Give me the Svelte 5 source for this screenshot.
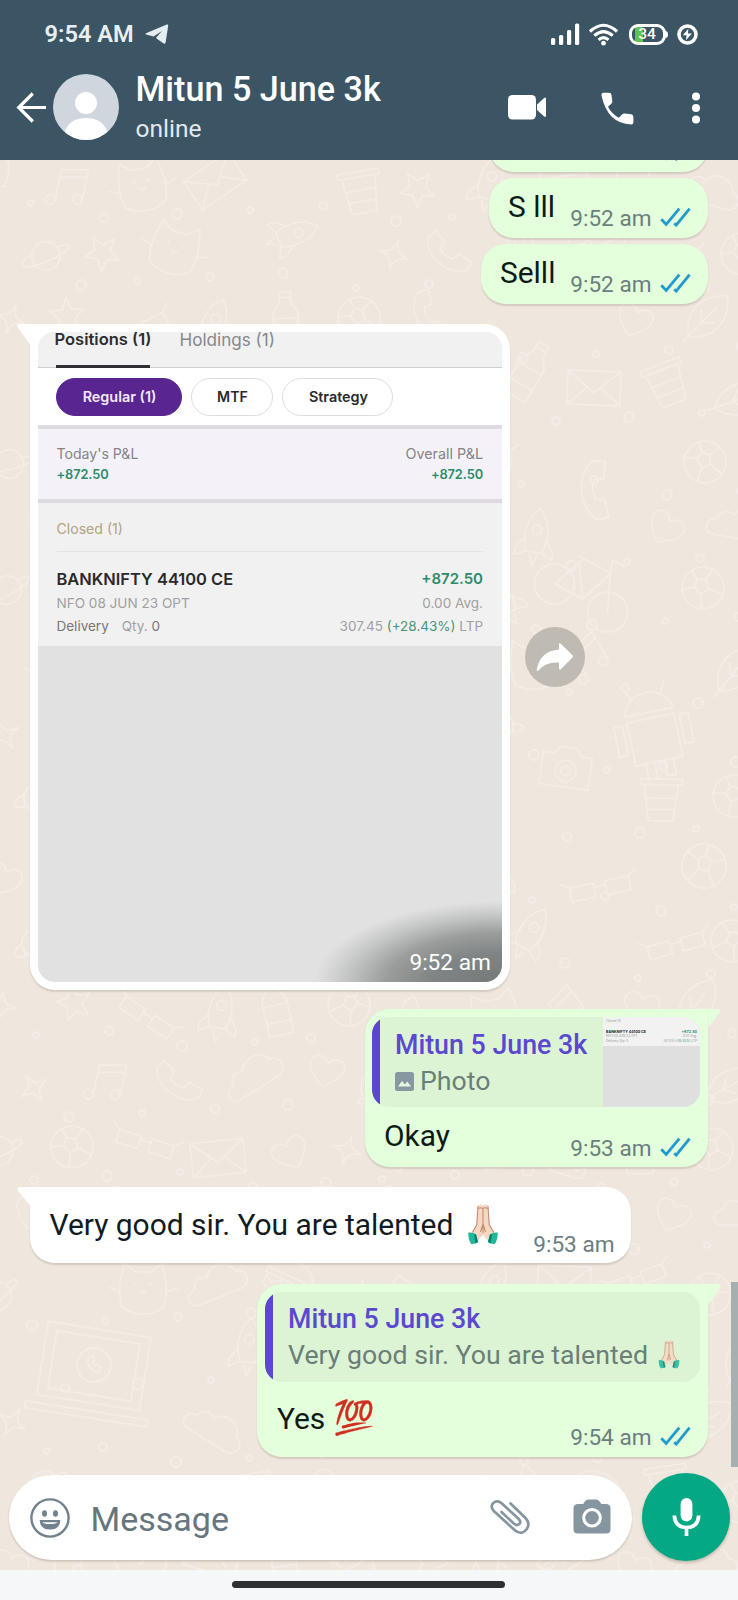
<script>
  // Wallpaper doodles: line drawings on a free canvas.
  const shapes = {
    heart: 'M0 16C-14 6-20-2-18-9c2-8 13-9 18 0 5-9 16-8 18 0C20-2 14 6 0 16z',
    star: 'M0-18L5-6 18-5 8 4 11 17 0 10-11 17-8 4-18-5-5-6z',
    spark: 'M0-16C2-4 4-2 16 0 4 2 2 4 0 16-2 4-4 2-16 0-4-2-2-4 0-16z',
    planet: 'M-15 0a15 15 0 1 0 30 0a15 15 0 1 0-30 0M-14-4C-34 4-28 14 0 6S34-12 13-8',
    rocket: 'M0-30C14-18 14 4 8 16H-8C-14 4-14-18 0-30zM-5-8a5 5 0 1 0 10 0a5 5 0 1 0-10 0M-11 2l-9 12v8l12-6M11 2l9 12v8l-12-6M-4 20l4 10 4-10',
    camera: 'M-26-14h12l5-8h18l5 8h12v34h-52zM-11 3a11 11 0 1 0 22 0a11 11 0 1 0-22 0M-5 3a5 5 0 1 0 10 0a5 5 0 1 0-10 0',
    android: 'M-24-8h48v44h-48zM-24-14a24 20 0 0 1 48 0zM-14-30l-7-11M14-30l7-11M-38-6h9v30h-9zM29-6h9v30h-9zM-14 36v16h9V36M5 36v16h9V36M-9-22h1M8-22h1',
    bike: 'M-46 16a20 20 0 1 0 40 0a20 20 0 1 0-40 0M14 16a20 20 0 1 0 40 0a20 20 0 1 0-40 0M-26 16l14-36h30l16 36M-14-14L6 16l12-34M-18-20h14M18-20l-4-12h14M-26 16H6',
    phone: 'M-22-16c-4 20 18 42 38 38l6-8-13-10-7 5C-6 5-9 1-10-4l6-6-9-13z',
    cup: 'M-18-16h36L13 22h-26zM-22-22h44v6h-44zM-15-2h30M-13 10h26',
    cat: 'M-22 20C-28 0-22-14-20-26l12 9h16l12-9c2 12 8 26 2 46-12 10-32 10-44 0zM-9-4h2M7-4h2M-3 3l3 3 3-3M-24 4l-12-4M24 4l12-4',
    ball: 'M-22 0a22 22 0 1 0 44 0a22 22 0 1 0-44 0M-7-6L0-11 7-6 5 4h-10zM0-11v-11M7-6l13-5M5 4l8 13M-5 4l-8 13M-7-6l-13-5',
    cloud: 'M-26 14h50c12-2 12-18 0-19C22-20 0-22-6-10c-9-5-16 0-16 7-13 1-14 15-4 17z',
    bottle: 'M-6-32H6v12l7 10v38h-26v-38l7-10zM-13-4h26M-13 14h26M-6-26H6',
    note: 'M-12 14V-18L16-24V8M-22 15a5 5 0 1 0 10 0a5 5 0 1 0-10 0M6 9a5 5 0 1 0 10 0a5 5 0 1 0-10 0M-12-10L16-16',
    mail: 'M-28-18h56v36h-56zM-28-18L0 5 28-18M-28 18L-7-1M28 18L7-1',
    leaf: 'M-20 20C-24-8-4-24 22-22 24 4 8 24-20 20zM-26 26L10-10M-6 6v-14M-6 6H8',
    burger: 'M-24-4C-24-26 24-26 24-4zM-26-4h52v6h-52zM-24 4l8 6 8-6 8 6 8-6 8 6 8-6v10c0 6-48 6-48 0z',
    glasses: 'M-30-6h24v14h-24zM6-6h24v14H6zM-6-2H6M-30-6l-8-6M30-6l8-6',
    laptop: 'M-52-36h104v74h-104zM-42-28h84v58h-84zM-62 46h124v7h-124zM-17 0a17 17 0 1 0 34 0a17 17 0 1 0-34 0M-7-6c0 8 6 13 13 12l2-4-5-3-2 2-3-4 2-2-3-4z'
  };
  const names = ['heart','planet','cat','cup','spark','rocket','cloud','ball','note','mail','leaf','star','burger','bottle','phone','glasses'];
  const fixed = [
    ['bike', 585, 422, 28, 1], ['android', 652, 566, -12, 1], ['camera', 566, 608, 8, 0.95],
    ['laptop', 94, 1205, 9, 1], ['bottle', 528, 212, 30, 1], ['rocket', 292, 75, 70, 0.9],
    ['ball', 704, 706, 12, 1], ['glasses', 600, 728, -12, 1], ['phone', 600, 330, 40, 1.1]
  ];
  const doodles = [...fixed];
  const dots = [];
  for (let row = 0; row < 21; row++) {
    for (let col = 0; col < 11; col++) {
      const k = row * 11 + col;
      const x = col * 70 + (row % 2) * 34 + ((k * 37) % 17) - 4;
      const y = row * 69 + ((k * 53) % 19) + 14;
      if (!fixed.some((f) => Math.hypot(f[1] - x, f[2] - y) < (f[0] === 'laptop' ? 88 : 62))) {
        doodles.push([names[(k * 7 + row * 3 + ((k * k) % 5)) % names.length], x, y, ((k * 47) % 70) - 35, 0.95]);
      }
      dots.push([x + 35, y + 29, 3 + (k % 3)]);
    }
  }
</script>

{#snippet ticks()}
  <svg class="ticks" width="31" height="20" viewBox="0 0 31 20"><path d="M1.3 12.2L6.2 17.4 19.3 1.6M14.2 16.2l2 1.9L29.6 1.6" /></svg>
{/snippet}

{#snippet hands(w, h)}
  <svg class="hands" width={w} height={h} viewBox="0 0 31 41" role="img" aria-label="Folded hands">
    <path d="M10.5 1.5q2.500-2 5 0 2.500-2 5 0L22 20.500l5 8-6.500 8-5-5.500-5 5.500L4 28.500l5-8z" fill="#f5d8c4" />
    <path d="M10.500 2L9.300 20.500 5 28.500M20.500 2l1.200 18.500 4.500 8M15.500 4v25M15.500 20l-2.500 8M15.500 20l2.500 8M11 4.500q2-1.500 4 0 2.500-1.500 5 0" fill="none" stroke="#c58d72" stroke-width="1.100" />
    <path d="M.8 28.500q4.500-.5 7.700 1.700L10.500 38q-3.500 2.500-7 2-2.900-5-2.700-11.500zM30.200 28.500q-4.500-.5-7.700 1.700L20.500 38q3.500 2.500 7 2 2.900-5 2.700-11.500z" fill="#1fb89a" />
    <path d="M8.500 30.200L10.500 38l-2.500 1.500-1.500-9zM22.500 30.200L20.500 38l2.500 1.500 1.500-9z" fill="#0a7f6c" />
  </svg>
{/snippet}

<div class="phone">
  <header>
    <div class="status">
      <span class="clock">9:54 AM</span>
      <svg class="plane" width="24" height="21" viewBox="0 0 24 21"><path d="M1 10.500Q0 9.800 1 9.300L21.800.6q1.600-.5 1.400 1.200L20.600 18.600q-.4 1.600-1.900.8L12.500 15.300 11 13.800 17 7 8.500 12.400z" fill="#e6edf0" /></svg>
      <div class="sys">
        <svg width="29" height="22" viewBox="0 0 29 22" fill="#fff"><rect x="0" y="15" width="4.200" height="7" rx="1.500" /><rect x="8" y="12" width="4.200" height="10" rx="1.500" /><rect x="16" y="7" width="4.200" height="15" rx="1.500" /><rect x="24" y="0.500" width="4.200" height="21.500" rx="1.500" /></svg>
        <svg class="wifi" width="29" height="23" viewBox="0 0 29 23" fill="none" stroke="#fff" stroke-width="3.100"><path d="M1 8.500Q14.500-4 28 8.500M5.300 12.700Q14.500 4.500 23.700 12.700M9.500 16.800Q14.500 12.300 19.500 16.800" /><circle cx="14.500" cy="20.200" r="2.400" fill="#fff" stroke="none" /></svg>
        <div class="battery"><span>34</span></div>
        <svg width="21" height="21" viewBox="0 0 21 21"><circle cx="10.500" cy="10.500" r="8.500" fill="none" stroke="#fff" stroke-width="3.600" /><path d="M11.300 4.800L5.800 11.300h3.700l-.5 5 5.800-6.900h-3.800z" fill="#fff" /></svg>
      </div>
    </div>
    <div class="bar">
      <svg class="back" width="31" height="31" viewBox="0 0 31 31" fill="none" stroke="#fff" stroke-width="3.200"><path d="M30 15.500H3M16.800 1.500L2.700 15.500l14.100 14" /></svg>
      <svg class="avatar" width="66" height="66" viewBox="0 0 66 66"><defs><clipPath id="face"><circle cx="33" cy="33" r="33" /></clipPath></defs><g clip-path="url(#face)"><rect width="66" height="66" fill="#cfd6de" /><circle cx="33" cy="29" r="11" fill="#fff" /><path d="M11 59Q16 44 33 44t22 15v8H11z" fill="#fff" /></g></svg>
      <div class="who"><div class="title">Mitun 5 June 3k</div><div class="online">online</div></div>
      <div class="actions">
        <svg width="39" height="25" viewBox="0 0 39 25" fill="#fff"><rect width="28" height="24.500" rx="4.500" /><path d="M29 9.500L36.200 3Q38 1.800 38 4v16.500q0 2.200-1.800 1L29 15z" /></svg>
        <svg width="33" height="33" viewBox="0 0 33 33" fill="#fff"><path d="M2.500.7h5.600q2.200 0 2.400 2.200l.8 6.200q.2 1.800-1.200 3L7 14.800q3.500 7 10.800 11l3.200-3.300q1.100-1.200 2.800-1l6.400.7q2.200.3 2.200 2.500v5.500q0 2.400-2.400 2.300Q6.500 31.500.5 3.500.2.900 2.500.700z" /></svg>
        <svg width="8" height="32" viewBox="0 0 8 32" fill="#fff"><circle cx="4" cy="4.500" r="4" /><circle cx="4" cy="16" r="4" /><circle cx="4" cy="27.500" r="4" /></svg>
      </div>
    </div>
  </header>

  <main>
    <svg class="wallpaper" width="738" height="1410" viewBox="0 0 738 1410" aria-hidden="true">
      {#each doodles as d}<path d={shapes[d[0]]} transform="translate({d[1]} {d[2]}) rotate({d[3]}) scale({d[4]})" />{/each}
      {#each dots as d}<circle cx={d[0]} cy={d[1]} r={d[2]} />{/each}
    </svg>

    <section class="list">
      <div class="bubble out short clipped"><span class="meta">9:52 am {@render ticks()}</span></div>
      <div class="bubble out short"><span class="body">S lll</span><span class="meta">9:52 am {@render ticks()}</span></div>
      <div class="bubble out short third"><span class="body">Selll</span><span class="meta">9:52 am {@render ticks()}</span></div>

      <div class="row">
        <div class="bubble in photo">
          <svg class="tail left" width="14" height="22" viewBox="0 0 14 22"><path d="M14 0H2Q-1 .8.800 3.500L13.500 21z" /></svg>
          <div class="shot">
            <div class="tabs"><span class="on">Positions (1)</span><span>Holdings (1)</span></div>
            <div class="pills"><span class="pill active">Regular (1)</span><span class="pill mtf">MTF</span><span class="pill strat">Strategy</span></div>
            <div class="pnl">
              <div><p>Today's P&amp;L</p><b>+872.50</b></div>
              <div class="end"><p>Overall P&amp;L</p><b>+872.50</b></div>
            </div>
            <div class="closed">
              <div class="label">Closed (1)</div>
              <div class="line main"><b>BANKNIFTY 44100 CE</b><b class="gain">+872.50</b></div>
              <div class="line avg"><span>NFO 08 JUN 23 OPT</span><span>0.00 Avg.</span></div>
              <div class="line ltp"><span><i class="dark">Delivery</i><i class="qty">Qty.</i> <i class="dark">0</i></span><span>307.45 <i class="green">(+28.43%)</i> LTP</span></div>
            </div>
            <span class="stamp">9:52 am</span>
          </div>
        </div>
        <div class="forward"><svg width="38" height="29" viewBox="0 0 38 29"><path d="M23 1.500Q23-.5 25 1L36.500 12.200q1 1.100 0 2.200L25 26q-2 1.500-2-.8v-5.700Q9 18.800 2.500 27.500.7 29 .8 26.500 4 8 23 6.500z" fill="#fff" /></svg></div>
      </div>

      <div class="bubble out okay">
        <svg class="tail right" width="14" height="22" viewBox="0 0 14 22"><path d="M0 0h11q2.800.8 1 3.200L.5 18z" /></svg>
        <div class="quote">
          <div class="qtext">
            <div class="name">Mitun 5 June 3k</div>
            <div class="sub"><svg width="19" height="19" viewBox="0 0 19 19"><rect width="19" height="19" rx="2.500" fill="#8798a1" /><path d="M3 14.500l4-5.500 3 3.500 2.200-3 4 5z" fill="#e5f7dd" /></svg>Photo</div>
          </div>
          <div class="thumb">
            <div class="tiny">
              <div>Closed (1)</div>
              <div class="t2"><b>BANKNIFTY 44100 CE</b><b class="gain">+872.50</b></div>
              <div class="t3"><span>NFO 08 JUN 23 OPT</span><span>0.00 Avg.</span></div>
              <div class="t3"><span>Delivery Qty. 0</span><span>307.45 <i class="green">(+28.43%)</i> LTP</span></div>
            </div>
          </div>
        </div>
        <div class="foot"><span class="body">Okay</span><span class="meta">9:53 am {@render ticks()}</span></div>
      </div>

      <div class="bubble in praise">
        <svg class="tail left" width="14" height="22" viewBox="0 0 14 22"><path d="M14 0H2Q-1 .8.800 3.500L13.500 19z" /></svg>
        <span class="body long">Very good sir. You are talented</span>
        {@render hands(32, 41)}
        <span class="meta">9:53 am</span>
      </div>

      <div class="bubble out yes">
        <svg class="tail right" width="14" height="22" viewBox="0 0 14 22"><path d="M0 0h11q2.800.8 1 3.200L.5 20z" /></svg>
        <div class="quote">
          <div class="qtext">
            <div class="name">Mitun 5 June 3k</div>
            <div class="sub words">Very good sir. You are talented {@render hands(22, 29)}</div>
          </div>
        </div>
        <div class="foot"><span class="body">Yes <span class="hundred">💯</span></span><span class="meta">9:54 am {@render ticks()}</span></div>
      </div>
    </section>

    <div class="composer">
      <div class="field">
        <svg width="40" height="40" viewBox="0 0 40 40" fill="none" stroke="#71828c" stroke-width="2.400"><circle cx="20" cy="20" r="18.600" /><ellipse cx="14.500" cy="15.500" rx="2.500" ry="3.300" fill="#71828c" stroke="none" /><ellipse cx="25.500" cy="15.500" rx="2.500" ry="3.300" fill="#71828c" stroke="none" /><path d="M10.300 22.500h19.400Q29 31 20 31t-9.700-8.500z" fill="#71828c" stroke-width="1.200" /><path d="M12.500 24.300h15q-.8 1.800-7.500 1.800t-7.500-1.800z" fill="#fff" stroke="none" /></svg>
        <span class="placeholder">Message</span>
        <svg class="clip" width="40" height="36" viewBox="0 0 40 36" fill="none" stroke="#8596a0" stroke-width="2.700" stroke-linecap="round"><path d="M20.500 3.500L35.500 18q5 5.500 1.300 11-5.600 7-12.300 1L3.800 11Q-.2 6.500 3.300 3q4.300-3.400 8.400.3L28.500 18.700q3 3 .8 5.300-2.600 2.200-5.500-.4L11.500 12" /></svg>
        <svg class="cam" width="38" height="35" viewBox="0 0 38 35"><path d="M11.500 3Q13 .5 15 .5h8.500q2 0 3.500 2.500l1.300 2H33q4.500 0 4.500 4.500v20.500q0 4.500-4.500 4.500H5q-4.500 0-4.500-4.500V9.500Q.5 5 5 5h5.200z" fill="#8596a0" /><circle cx="19" cy="18.700" r="8.300" fill="#8596a0" stroke="#fff" stroke-width="3" /></svg>
      </div>
      <div class="mic"><svg width="29" height="39" viewBox="0 0 29 39"><rect x="8.600" y="0" width="11.800" height="23.500" rx="5.900" fill="#fff" /><path d="M2.300 17.500Q3 29.500 14.500 29.500T26.700 17.500M14.500 29.500V38" fill="none" stroke="#fff" stroke-width="3.700" /></svg></div>
    </div>
    <div class="scroll"></div>
  </main>
  <nav><div class="handle"></div></nav>
</div>

<style>
  :global(body) { margin: 0; }
  .phone { width: 738px; height: 1600px; display: flex; flex-direction: column; overflow: hidden; font-family: Roboto, sans-serif; }
  svg { display: block; flex: none; }
  p { margin: 0; }
  i { font-style: normal; }
  header { height: 160px; background: #3b5564; color: #fff; flex: none; display: flex; flex-direction: column; }
  .status { height: 68px; display: flex; align-items: center; padding: 0 40px 0 44.5px; box-sizing: border-box; }
  .clock { font-size: 23.600px; font-weight: 600; color: #e9eff1; white-space: nowrap; }
  .plane { margin-left: 11px; }
  .sys { display: flex; align-items: center; margin-left: auto; }
  .wifi { margin: 0 10.500px 0 9px; }
  .battery { position: relative; width: 31px; height: 15px; border: 3px solid #fff; border-radius: 9px; margin-right: 11.500px; font-size: 15.500px; font-weight: 500; line-height: 15px; text-align: center; background: linear-gradient(90deg, transparent 2.500px, #5cc34e 2.500px 11px, transparent 11px); }
  .battery::after { content: ''; position: absolute; right: -5px; top: 4px; width: 3px; height: 7px; border-radius: 0 3px 3px 0; background: #fff; }
  .bar { height: 78px; display: flex; align-items: center; padding: 0 38px 0 16px; }
  .avatar { margin-left: 6px; }
  .who { margin-left: 16.500px; margin-top: 3px; white-space: nowrap; }
  .title { font-size: 34.150px; font-weight: 500; line-height: 40px; }
  .online { font-size: 24.500px; line-height: 38px; margin-top: 1px; color: #e3e9ec; }
  .actions { margin-left: auto; display: flex; align-items: center; }
  .actions svg { margin-top: 1.500px; }
  .actions svg:nth-child(2) { margin: 2px 58px 0 54px; }

  main { position: relative; height: 1410px; flex: none; background: #efe6de; overflow: hidden; display: flex; flex-direction: column; }
  .wallpaper { position: absolute; inset: 0; fill: none; stroke: #f4ece6; stroke-width: 1.900; stroke-linecap: round; stroke-linejoin: round; }
  .list { position: relative; height: 1297px; flex: none; display: flex; flex-direction: column; align-items: flex-start; padding: 0 30px; }
  .bubble { position: relative; border-radius: 25px; box-sizing: border-box; box-shadow: 0 1.500px 1.500px rgba(90, 80, 60, 0.180); flex: none; }
  .out { align-self: flex-end; background: #e4ffdb; }
  .in { background: #fff; }
  .body { font-size: 29.900px; color: #0d1a16; white-space: pre; }
  .meta { font-size: 22.600px; color: #6b7e80; display: flex; align-items: center; gap: 8.500px; white-space: nowrap; }
  .ticks { fill: none; stroke: #1f9bd0; stroke-width: 2.800; position: relative; top: -1.500px; }
  .short { width: 219px; height: 60px; margin-top: 6px; padding: 0 17px 0 19px; display: flex; justify-content: space-between; align-items: flex-start; }
  .short .body { line-height: 58px; }
  .short .meta { line-height: 81.500px; height: 81.500px; }
  .short.clipped { margin-top: -48px; justify-content: flex-end; }
  .short.third { width: 227px; }
  .tail { position: absolute; top: 0; }
  .tail.left { left: -13.500px; fill: #fff; }
  .tail.right { right: -13.500px; fill: #e4ffdb; }
  .row { display: flex; align-items: center; gap: 15px; margin-top: 20px; }
  .photo { width: 480px; height: 666px; padding: 8px; border-radius: 0 25px 25px 25px; }
  .shot { position: relative; height: 650px; border-radius: 17px; overflow: hidden; background: #e1e1e1; font-family: Inter, sans-serif; color: #2a2a2c; white-space: nowrap; }
  .tabs { height: 36px; box-sizing: border-box; background: #f1f1f1; border-bottom: 1.500px solid #cfcfd1; display: flex; gap: 28px; padding-left: 16.500px; line-height: 15px; }
  .tabs span { color: #87878a; height: 36px; font-size: 17.100px; }
  .tabs .on { color: #2d2d30; font-weight: 600; font-size: 16.550px; position: relative; }
  .tabs .on::after { content: ''; position: absolute; left: 1.500px; right: 1.500px; bottom: 0; height: 3px; background: #302f34; }
  .pills { height: 57px; box-sizing: border-box; padding: 9.500px 18px; background: #fff; display: flex; gap: 9px; }
  .pill { height: 38px; box-sizing: border-box; border: 1.500px solid #dedee0; border-radius: 19px; text-align: center; line-height: 36px; font-size: 14.400px; font-weight: 600; width: 82px; padding-left: 1px; }
  .pill.active { width: 126px; background: #592591; color: #f3e9fa; border-color: #592591; }
  .pill.mtf { font-size: 14.200px; }
  .pill.strat { width: 111px; padding-left: 2px; }
  .pnl { height: 78px; box-sizing: border-box; border-top: 4px solid #dddbe1; border-bottom: 4px solid #dddbe1; background: #f4f2f8; display: flex; justify-content: space-between; padding: 15px 19px 0 18.500px; }
  .pnl p { font-size: 14.100px; line-height: 20px; color: #858389; }
  .pnl .end p { font-size: 14.350px; }
  .pnl b { font-size: 12.850px; line-height: 21px; font-weight: 600; color: #2c8c6c; display: block; letter-spacing: -0.100px; }
  .end { text-align: right; }
  .closed { height: 143px; background: #f1f1f1; padding: 0 19px 0 18.500px; box-sizing: border-box; }
  .label { height: 48.500px; line-height: 51px; font-size: 14.100px; color: #b3a27e; border-bottom: 1.500px solid #e4e4e4; box-sizing: border-box; }
  .line { display: flex; justify-content: space-between; font-size: 13.550px; color: #a09fa1; }
  .line b { font-weight: 600; color: #2a2a2c; font-size: 16.450px; }
  .line b.gain { color: #2c8c6c; font-size: 15px; }
  .main { line-height: 24px; height: 24px; padding-top: 15px; }
  .avg { line-height: 24px; height: 24px; }
  .ltp { line-height: 24px; height: 24px; margin-top: -1px; font-size: 13.500px; }
  .dark { color: #777679; }
  .qty { margin-left: 13px; }
  .green { color: #45967c; }
  .stamp { position: absolute; inset: auto 0 0 auto; width: 215px; height: 100px; padding: 61px 11px 0 0; box-sizing: border-box; text-align: right; font: 22.700px/40px Roboto, sans-serif; color: #fff; background: radial-gradient(ellipse 188px 84px at 100% 103%, #747879 0, #808484 38%, #9a9d9c 62%, #c3c5c4 82%, #e1e1e100 100%); }
  .forward { width: 60px; height: 60px; border-radius: 50%; background: #bfbbb3; display: flex; align-items: center; justify-content: center; }

  .okay { width: 343px; height: 158px; margin-top: 19px; padding: 8px 8px 0 7px; border-radius: 25px 0 25px 25px; }
  .quote { height: 90px; border-radius: 17px; overflow: hidden; background: linear-gradient(90deg, #5b47d0 8px, #dcf4d4 8px); display: flex; padding-left: 8px; box-sizing: border-box; white-space: nowrap; }
  .qtext { flex: 1; padding-left: 15px; padding-top: 8px; }
  .name { font-size: 26.750px; font-weight: 500; line-height: 40px; color: #5b47d0; }
  .sub { font-size: 26.700px; line-height: 34px; margin-top: -1px; color: #6b7e78; display: flex; align-items: center; gap: 6px; }
  .sub svg { margin-top: 1px; }
  .thumb { width: 97px; background: #dfdfdf; }
  .tiny { height: 29px; background: #f2f2f2; font-family: Inter, sans-serif; font-size: 3.200px; line-height: 5px; color: #999; padding: 2px 3px 0; box-sizing: border-box; }
  .tiny b { font-size: 3.700px; color: #222; }
  .tiny .gain { color: #2c8c6c; }
  .t2, .t3 { display: flex; justify-content: space-between; }
  .t2 { margin-top: 5px; }
  .foot { display: flex; justify-content: space-between; align-items: flex-start; padding: 0 9px 0 12px; }
  .okay .body { line-height: 58px; }
  .okay .meta { height: 83px; line-height: 83px; }

  .praise { width: 601px; height: 76px; margin-top: 20px; padding: 0 16.500px 0 19.500px; border-radius: 0 25px 25px 25px; display: flex; align-items: flex-start; }
  .praise .body { line-height: 75px; font-size: 29.950px; color: #121b22; }
  .praise .hands { margin: 17px 0 0 14px; }
  .praise .meta { margin-left: auto; line-height: 115px; height: 115px; }

  .yes { width: 451px; height: 173px; margin-top: 21px; padding: 7.500px 8px 0; border-radius: 25px 0 25px 25px; }
  .yes .name { margin-top: -0.500px; }
  .yes .sub { gap: 10.500px; }
  .yes .sub .hands { margin-top: -1px; opacity: 0.850; }
  .yes .body { line-height: 74px; height: 74px; }
  .yes .meta { height: 112px; line-height: 112px; }
  .hundred { font-family: 'Noto Color Emoji', sans-serif; font-size: 33.500px; margin-left: 1px; line-height: 1; filter: saturate(1.300) brightness(0.820); }

  .composer { position: relative; display: flex; padding: 16px 8px 0 9px; gap: 10px; }
  .field { margin-top: 2px; width: 623px; height: 85px; border-radius: 43px; background: #fff; box-sizing: border-box; padding: 0 21px 0 21px; display: flex; align-items: center; box-shadow: 0 1.500px 2px rgba(90, 80, 60, 0.250); }
  .placeholder { font-size: 34px; color: #66757e; margin-left: 20.500px; line-height: 40px; margin-top: 2.500px; }
  .clip { margin-left: auto; }
  .cam { margin-left: 43px; margin-top: -2px; }
  .mic { width: 88px; height: 88px; flex: none; border-radius: 50%; background: #05a884; display: flex; align-items: center; justify-content: center; box-shadow: 0 2px 3px rgba(90, 80, 60, 0.300); }
  .scroll { position: absolute; right: 0; top: 1122px; width: 7px; height: 185px; background: #a7b0b1; }
  nav { height: 30px; background: #f5f7f9; display: flex; justify-content: center; padding-top: 11px; box-sizing: border-box; }
  .handle { width: 273px; height: 7px; border-radius: 4px; background: #2e3133; margin-right: 1px; }
</style>
